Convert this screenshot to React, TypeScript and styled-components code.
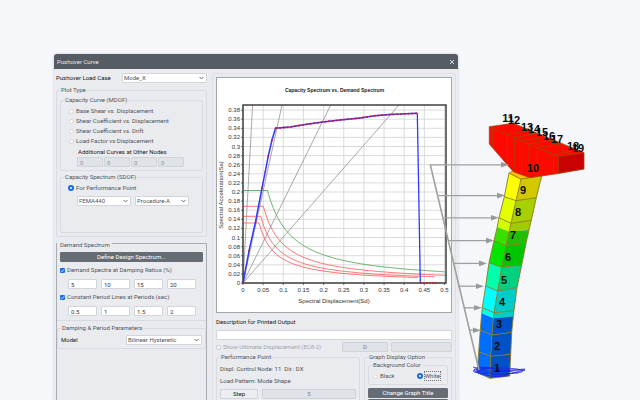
import React from "react";
import styled, { createGlobalStyle, css } from "styled-components";

const GlobalStyle = createGlobalStyle`
  *, *::before, *::after { box-sizing: border-box; }
  body {
    margin: 0;
    background: #f5f7fb;
    color: #50555c;
    font: 6px/8px Roboto, "Liberation Sans", sans-serif;
  }
  button, input, select { font: inherit; color: inherit; margin: 0; }
`;

const Page = styled.main`
  display: grid;
  grid-template-columns: minmax(404px, 1fr) 182px;
  grid-template-rows: minmax(0, 1fr);
  height: 100vh;
  padding: 54px 0 0 54px;
  overflow: hidden;
`;

const Dialog = styled.section`
  display: flex;
  flex-direction: column;
  min-height: 0;
  overflow: hidden;
  background: #e9ebef;
  border-radius: 3px 3px 0 0;
  box-shadow: 0 0 3px #c9ced6;
`;

const TitleBar = styled.header`
  display: flex;
  flex: none;
  align-items: center;
  justify-content: space-between;
  height: 15px;
  padding: 0 3px;
  background: #555c64;
  color: #e4e6e9;
`;

const Title = styled.h1`
  margin: 0;
  font: inherit;
`;

const CloseButton = styled.button`
  display: flex;
  padding: 0;
  border: 0;
  background: none;
`;

const Body = styled.div`
  display: grid;
  flex: 1;
  grid-template-columns: 158px 1fr;
  min-height: 0;
`;

const Settings = styled.div`
  display: flex;
  flex-direction: column;
  padding: 4px 5px 0 2px;
`;

const Results = styled.div`
  margin: 4px 2px 0 0;
  padding: 3px;
  border: 1px solid #dde0e5;
  border-radius: 2px;
`;

const Row = styled.div<{ $top?: number; $inset?: number }>`
  display: flex;
  align-items: center;
  margin-top: ${(p) => p.$top ?? 0}px;
  padding: 0 ${(p) => p.$inset ?? 0}px;
`;

const Spacer = styled.span<{ $small?: boolean }>`
  flex: ${(p) => (p.$small ? "0 0 4px" : "1")};
`;

const Group = styled.fieldset<{ $top?: number; $bottom?: number; $pad?: number }>`
  min-width: 0;
  margin: ${(p) => p.$top ?? 0}px 0 0;
  padding: ${(p) => p.$pad ?? 2}px 3px ${(p) => p.$bottom ?? 3}px;
  border: 1px solid #d8dbe0;
  border-radius: 2px;
`;

const Legend = styled.legend`
  padding: 0 1px;
`;

const DemandGroup = styled.fieldset`
  flex: 1;
  min-width: 0;
  margin: 0;
  padding: 3px 0 0;
  border: 1px solid #a9adb3;
  border-bottom: 0;
`;

const DemandLegend = styled.legend`
  padding: 4px 2px 0 3px;
`;

const Strong = styled.label`
  color: #16191c;
`;

const Caption = styled.div<{ $top?: number }>`
  margin-top: ${(p) => p.$top ?? 0}px;
  padding-left: 14px;
  color: #16191c;
`;

const Divider = styled.hr`
  width: 100%;
  height: 1px;
  margin: 4px 0 3px;
  border: 0;
  background: #d8dbe0;
`;

const SelectBox = styled.span<{ $width: number }>`
  display: grid;
  flex: none;
  width: ${(p) => p.$width}px;
  height: 10px;
  align-items: center;
  > * { grid-area: 1 / 1; }
  > svg { justify-self: end; margin-right: 3px; pointer-events: none; }
`;

const NativeSelect = styled.select`
  appearance: none;
  width: 100%;
  height: 10px;
  padding: 0 1px;
  border: 1px solid #d2d6db;
  border-radius: 1px;
  background: #fff;
  line-height: 8px;
`;

const TextBox = styled.input<{ $width?: number }>`
  width: ${(p) => (p.$width ? `${p.$width}px` : "100%")};
  min-width: 0;
  height: 10px;
  padding: 0 2px;
  border: 1px solid #d2d6db;
  border-radius: 1px;
  background: #fff;
  color: #33373c;
  line-height: 8px;
  &:disabled { background: #dfe2e7; color: #8d939b; border-color: #d1d5da; }
`;

const Fields = styled.div<{ $gap: number; $top: number; $left: number }>`
  display: flex;
  gap: ${(p) => p.$gap}px;
  margin-top: ${(p) => p.$top}px;
  padding-left: ${(p) => p.$left}px;
`;

const Option = styled.label<{ $muted?: boolean; $left?: number }>`
  display: flex;
  align-items: center;
  gap: 2px;
  height: 10px;
  padding-left: ${(p) => p.$left ?? 0}px;
  white-space: nowrap;
  ${(p) => p.$muted && css`color: #a2a7ae;`}
`;

const Radio = styled.input`
  appearance: none;
  flex: none;
  width: 5px;
  height: 5px;
  border: 1px solid #d3d7dc;
  border-radius: 50%;
  background: #fff;
  &:checked { width: 6px; height: 6px; margin-left: -1px; border: 2px solid #176be8; }
`;

const CheckMark = styled.span`
  display: grid;
  flex: none;
  width: 5px;
  height: 5px;
  > * { grid-area: 1 / 1; }
  > svg { pointer-events: none; }
`;

const CheckInput = styled.input`
  appearance: none;
  width: 5px;
  height: 5px;
  border: 1px solid #cdd1d7;
  border-radius: 1px;
  background: #eff1f4;
  &:checked { border: 0; background: #176be8; }
`;

const FocusText = styled.span`
  outline: 1px dotted #70757c;
`;

const Button = styled.button<{ $dark?: boolean; $flat?: boolean; $top?: number }>`
  width: 100%;
  height: 10px;
  margin-top: ${(p) => p.$top ?? 0}px;
  padding: 0;
  border: 1px solid #cfd3d8;
  border-radius: 1px;
  background: #eceef1;
  color: #16191c;
  line-height: 8px;
  ${(p) => p.$flat && css`background: #dfe2e7; color: #7b8088;`}
  ${(p) => p.$dark && css`background: #656c74; border-color: #656c74; color: #fff;`}
`;

const StepGrid = styled.div`
  display: grid;
  grid-template-columns: 38px 1fr;
  gap: 1px 4px;
  margin-top: 3px;
`;

const UltimateRow = styled.div`
  display: grid;
  grid-template-columns: 1fr 46px 61px;
  gap: 3px;
  margin-top: 2px;
`;

const Bottom = styled.div`
  display: grid;
  grid-template-columns: 1fr 88px;
  gap: 4px;
  align-items: start;
  margin-top: 1px;
`;

const Info = styled.p`
  margin: 0 0 4px;
  white-space: pre;
`;

const ChartFrame = styled.figure`
  margin: 0;
  border: 1px solid #a3a7ac;
  background: #fff;
  > svg { display: block; width: 100%; }
`;

const ModelView = styled.figure`
  z-index: 1;
  width: 212px;
  margin: 0 0 0 -30px;
  pointer-events: none;
  > svg { display: block; }
`;

function Select({ id, width, value, label }: { id?: string; width: number; value: string; label?: string }) {
  return (
    <SelectBox $width={width}>
      <NativeSelect id={id} aria-label={label} defaultValue={value}>
        <option>{value}</option>
      </NativeSelect>
      <svg width="5" height="4" viewBox="0 0 5 4" fill="none" stroke="#555b62" strokeWidth="0.9">
        <path d="M0.5 0.9L2.5 2.9L4.5 0.9" />
      </svg>
    </SelectBox>
  );
}

function Check({ label, checked, disabled }: { label: string; checked?: boolean; disabled?: boolean }) {
  return (
    <Option $muted={disabled}>
      <CheckMark>
        <CheckInput type="checkbox" defaultChecked={checked} disabled={disabled} />
        {checked && (
          <svg width="5" height="5" viewBox="0 0 5 5" fill="none" stroke="#fff" strokeWidth="0.8">
            <path d="M1 2.6L2.1 3.7L4.1 1.3" />
          </svg>
        )}
      </CheckMark>
      {label}
    </Option>
  );
}

const X0 = 243;
const Y0 = 283;
const X_LABELS = ["0", "0.05", "0.1", "0.15", "0.2", "0.25", "0.3", "0.35", "0.4", "0.45", "0.5"];
const Y_LABELS = Array.from({ length: 20 }, (_, i) => String(Number((i * 0.02).toFixed(2))));
const xTick = (i: number) => X0 + i * 20.15;
const yTick = (i: number) => Y0 - i * 9.1;

const CAPACITY: [number, number][] = [
  [243, 283], [249, 251], [255.7, 221], [262, 188], [265.3, 171.7], [268.3, 156],
  [272, 140], [275.5, 128.3], [290, 127], [306.7, 124.3], [323, 122], [340, 120],
  [360, 118], [375, 115.7], [390, 114.5], [417.3, 113.3],
];
const toPoints = (p: [number, number][]) => p.map((q) => q.join(",")).join(" ");

function demandCurve(plateau: number, corner: number, end: number) {
  const k = plateau * corner;
  let d = `M${X0} ${Y0 - plateau}H${X0 + corner}`;
  for (let x = corner + 3; x <= end; x += 3) d += `L${X0 + x} ${(Y0 - k / x).toFixed(1)}`;
  return d;
}

function SpectrumChart() {
  return (
    <ChartFrame>
      <svg viewBox="217 78 234 234" fontFamily='"Liberation Sans", sans-serif' fontSize="6" fill="#333" role="img" aria-label="Capacity and demand spectrum">
        <text x="334.5" y="92" fontSize="5" fontWeight="700" fill="#222" textAnchor="middle">Capacity Spectrum vs. Demand Spectrum</text>
        <g stroke="#d2d2d2" strokeWidth="0.8">
          {X_LABELS.map((l, i) => <path key={l} d={`M${xTick(i)} 105V285`} />)}
          {Y_LABELS.map((l, i) => <path key={l} d={`M241 ${yTick(i)}H446`} />)}
        </g>
        <g stroke="#858585" strokeWidth="0.7">
          <path d="M243 283L252.6 105M243 283L282 105M243 283L330.7 105M243 283L399 105" />
        </g>
        <g fill="none" strokeWidth="0.8">
          <path d={demandCurve(92.5, 24.5, 204)} stroke="#4aa04e" />
          <path d={demandCurve(76.7, 20.3, 204)} stroke="#ff5555" />
          <path d={demandCurve(66.7, 17.7, 194)} stroke="#ff5555" />
          <path d={demandCurve(60, 16, 175)} stroke="#ff5555" />
        </g>
        <rect x={X0} y="105" width="203" height="178" fill="none" stroke="#333" strokeWidth="1.4" />
        {X_LABELS.map((l, i) => <path key={l} d={`M${xTick(i)} 283V285`} stroke="#444" strokeWidth="0.7" />)}
        {Y_LABELS.map((l, i) => <path key={l} d={`M241 ${yTick(i)}H243`} stroke="#444" strokeWidth="0.7" />)}
        <polyline points={toPoints(CAPACITY)} fill="none" stroke="#3038ff" strokeWidth="1.5" />
        <polyline points={toPoints(CAPACITY.slice(7))} fill="none" stroke="#e8101c" strokeWidth="1.7" strokeDasharray="1.8 2" />
        <path d="M417.3 113.3L418.3 168L420.3 283" fill="none" stroke="#3038ff" strokeWidth="1.3" />
        <path d="M420 283H438" stroke="#e8101c" strokeWidth="1.6" strokeDasharray="1.6 1.4" />
        {CAPACITY.slice(0, 8).map(([x, y]) => <circle key={y} cx={x} cy={y} r="0.9" fill="#d0143c" />)}
        {X_LABELS.map((l, i) => <text key={l} x={xTick(i)} y="292" textAnchor="middle">{l}</text>)}
        {Y_LABELS.map((l, i) => <text key={l} x="240" y={yTick(i) + 2} textAnchor="end">{l}</text>)}
        <text x="334" y="303" textAnchor="middle">Spectral Displacement(Sd)</text>
        <text transform="translate(223 195) rotate(-90)" textAnchor="middle">Spectral Acceleration(Sa)</text>
      </svg>
    </ChartFrame>
  );
}

type Level = { l: [number, number]; m: [number, number]; r: [number, number] };
const LEVELS: Level[] = [
  { l: [509, 173], m: [521, 179], r: [542, 175] },
  { l: [504.3, 196.7], m: [516, 200.7], r: [536.3, 197.7] },
  { l: [499, 217.7], m: [511, 223.3], r: [531.3, 220.3] },
  { l: [497.3, 227], m: [509, 231.7], r: [529, 230] },
  { l: [494, 240.7], m: [506, 246], r: [526, 243.3] },
  { l: [489, 262.7], m: [501.7, 267.3], r: [521.7, 265] },
  { l: [485.7, 286], m: [497.7, 291], r: [517, 287.7] },
  { l: [482.3, 307.7], m: [494, 312.7], r: [514, 310.7] },
  { l: [481.7, 313.3], m: [493.3, 318.3], r: [513.3, 316.3] },
  { l: [480.3, 330], m: [492, 335], r: [511.7, 332.3] },
  { l: [478.7, 351.7], m: [490.7, 356.3], r: [510.7, 354.3] },
  { l: [477.3, 372.7], m: [490, 378.3], r: [509.7, 376] },
];
const FACES: [string, string][] = [
  ["#ffff00", "#d2c800"], ["#e4ff00", "#a8d000"], ["#d2ff00", "#a0cc00"], ["#38e000", "#20be00"],
  ["#00e600", "#00c400"], ["#00ffaa", "#00d080"], ["#00ffff", "#00cccc"], ["#00ffe6", "#00d0c0"],
  ["#006eff", "#0050c8"], ["#006eff", "#0050c8"], ["#006eff", "#0050c8"],
];
const NODES: [string, number, number][] = [
  ["1", 497, 368], ["2", 497, 346], ["3", 499, 324], ["4", 502, 302], ["5", 504, 279.5],
  ["6", 508, 257], ["7", 513, 235], ["8", 518, 212], ["9", 523, 190], ["10", 533, 167.5],
  ["11", 508, 118], ["12", 514, 120], ["13", 527, 126.5], ["14", 534, 129], ["15", 542, 132],
  ["16", 549, 135.5], ["17", 557, 139], ["18", 573, 146], ["19", 578, 148],
];
const ARROWS: [number, number, number][] = [
  [430, 509, 164.8], [438, 505, 195.6], [444, 499, 217.8], [448, 494, 240.6],
  [453, 487, 263.4], [458, 484, 286.2], [464, 482, 307.8], [469, 481, 330.2],
];
const SKIPPED_EDGES = [3, 8];

function PierModel() {
  return (
    <ModelView>
      <svg width="212" height="346" viewBox="428 54 212 346" role="img" aria-label="Bridge pier model">
        {FACES.map(([left, right], i) => {
          const a = LEVELS[i];
          const b = LEVELS[i + 1];
          return (
            <g key={i}>
              <polygon points={toPoints([a.l, a.m, b.m, b.l])} fill={left} />
              <polygon points={toPoints([a.m, a.r, b.r, b.m])} fill={right} />
            </g>
          );
        })}
        <g fill="none" stroke="#8a7a20" strokeWidth="0.9">
          {LEVELS.map((v, i) => !SKIPPED_EDGES.includes(i) && <polyline key={i} points={toPoints([v.l, v.m, v.r])} />)}
          <polyline points={toPoints(LEVELS.map((v) => v.l))} />
          <polyline points={toPoints(LEVELS.map((v) => v.m))} />
          <polyline points={toPoints(LEVELS.map((v) => v.r))} />
        </g>
        <path d="M509 173L515 169L532 174L542 175L521 179Z" fill="#ffc000" stroke="#8a7a20" strokeWidth="0.7" />
        <path d="M489.3 126.7L513.3 123.3L584 152.7V169L558.3 173.5L530 177.7L521.7 175L513.3 171.7L489.3 144Z" fill="#ff0800" />
        <path d="M558.3 156.5L584 152.7V169L558.3 173.5Z" fill="#c80000" />
        <path
          d="M489.3 144V126.7L513.3 123.3L584 152.7V169L558.3 173.5M489.3 126.7L515 138L558.3 156.5L584 152.7M492.3 128.5V147.5M507.3 134.7V164.5M514.3 137.7V171.7M521.7 141V175M529 144V177M537.3 147.7V176.5M553.3 154.5V174M558.3 156.5V173.5M507.3 134.7L529 130M514.3 137.7L537 133.5M521.7 141L545 137M529 144L553 140M537.3 147.7L562 144M553.3 154.5L578 150.3M489.3 144L513.3 171.7L530 177.7L558.3 173.5"
          fill="none" stroke="#a04a08" strokeWidth="0.8"
        />
        <g fill="none" stroke="#2222dd" strokeWidth="0.8">
          <ellipse cx="498" cy="371" rx="25" ry="3" />
          <ellipse cx="491" cy="372" rx="17" ry="4" transform="rotate(8 491 372)" />
          <path d="M473 367L486 371L525 370L504 375L476 371L490 368L518 373M502 371L525 369" />
        </g>
        <path d="M430.3 164.8L479 370" stroke="#a0a0a0" strokeWidth="1.6" />
        {ARROWS.map(([x1, x2, y]) => (
          <g key={y}>
            <path d={`M${x1} ${y}H${x2 - 5}`} stroke="#a0a0a0" strokeWidth="1.3" />
            <path d={`M${x2} ${y}L${x2 - 8} ${y - 2.8}V${y + 2.8}Z`} fill="#9a9a9a" />
          </g>
        ))}
        <g fontFamily='"Liberation Sans", sans-serif' fontSize="11" fontWeight="700" fill="#0a0a0a" textAnchor="middle">
          {NODES.map(([n, x, y]) => <text key={n} x={x} y={y + 4}>{n}</text>)}
        </g>
      </svg>
    </ModelView>
  );
}

const PLOT_TYPES = [
  "Base Shear vs. Displacement",
  "Shear Coefficient vs. Displacement",
  "Shear Coefficient vs. Drift",
  "Load Factor vs Displacement",
];

export default function App() {
  return (
    <>
      <GlobalStyle />
      <Page>
        <Dialog aria-label="Pushover Curve">
          <TitleBar>
            <Title>Pushover Curve</Title>
            <CloseButton aria-label="Close">
              <svg width="6" height="6" viewBox="0 0 6 6" stroke="#e8eaec" strokeWidth="0.9">
                <path d="M1 1L5 5M5 1L1 5" />
              </svg>
            </CloseButton>
          </TitleBar>
          <Body>
            <Settings>
              <Row>
                <Strong htmlFor="load-case">Pushover Load Case</Strong>
                <Spacer />
                <Select id="load-case" width={85} value="Mode_X" />
              </Row>
              <Group $top={3}>
                <Legend>Plot Type</Legend>
                <Group>
                  <Legend>Capacity Curve (MDOF)</Legend>
                  {PLOT_TYPES.map((t) => (
                    <Option key={t} $left={5}>
                      <Radio type="radio" name="plot" />
                      {t}
                    </Option>
                  ))}
                  <Caption $top={2}>Additional Curves at Other Nodes</Caption>
                  <Fields $gap={1} $top={1} $left={13}>
                    {[1, 2, 3, 4].map((n) => (
                      <TextBox key={n} $width={26} disabled defaultValue="0" aria-label={`Other node ${n}`} />
                    ))}
                  </Fields>
                </Group>
                <Group $top={2} $bottom={26}>
                  <Legend>Capacity Spectrum (SDOF)</Legend>
                  <Option $left={5}>
                    <Radio type="radio" name="plot" defaultChecked />
                    For Performance Point
                  </Option>
                  <Fields $gap={4} $top={3} $left={13}>
                    <Select width={54} value="FEMA440" label="Guideline" />
                    <Select width={54} value="Procedure-A" label="Procedure" />
                  </Fields>
                </Group>
              </Group>
              <DemandGroup>
                <DemandLegend>Demand Spectrum</DemandLegend>
                <Row $inset={3}><Button $dark>Define Design Spectrum...</Button></Row>
                <Row $inset={3} $top={3}><Check checked label="Demand Spectra at Damping Ratios (%)" /></Row>
                <Fields $gap={4} $top={4} $left={11}>
                  {["5", "10", "15", "20"].map((v, i) => (
                    <TextBox key={v} $width={29} defaultValue={v} aria-label={`Damping ratio ${i + 1}`} />
                  ))}
                </Fields>
                <Row $inset={3} $top={3}><Check checked label="Constant Period Lines at Periods (sec)" /></Row>
                <Fields $gap={4} $top={4} $left={11}>
                  {["0.5", "1", "1.5", "2"].map((v, i) => (
                    <TextBox key={v} $width={29} defaultValue={v} aria-label={`Period ${i + 1}`} />
                  ))}
                </Fields>
                <Divider />
                <Group $pad={3}>
                  <Legend>Damping &amp; Period Parameters</Legend>
                  <Row>
                    <Strong htmlFor="model">Model</Strong>
                    <Spacer />
                    <Select id="model" width={76} value="Bilinear Hysteretic" />
                  </Row>
                </Group>
              </DemandGroup>
            </Settings>
            <Results>
              <SpectrumChart />
              <Row $top={5}><Strong htmlFor="description">Description for Printed Output</Strong></Row>
              <Row $top={4}><TextBox id="description" /></Row>
              <UltimateRow>
                <Check disabled label="Show Ultimate Displacement  (EC8-2)" />
                <Button $flat disabled>D</Button>
                <TextBox disabled aria-label="Ultimate displacement" />
              </UltimateRow>
              <Bottom>
                <Group $pad={4}>
                  <Legend>Performance Point</Legend>
                  <Info>Displ. Control Node: 11  Dir.: DX</Info>
                  <Info>Load Pattern: Mode Shape</Info>
                  <StepGrid>
                    <Button>Step</Button>
                    <Button $flat>5</Button>
                    <Button aria-label="Value" />
                    <Button $flat aria-label="Result" />
                  </StepGrid>
                </Group>
                <Group $pad={0}>
                  <Legend>Graph Display Option</Legend>
                  <Group>
                    <Legend>Background Color</Legend>
                    <Row>
                      <Option $left={1}>
                        <Radio type="radio" name="background" />
                        Black
                      </Option>
                      <Spacer />
                      <Option>
                        <Radio type="radio" name="background" defaultChecked />
                        <FocusText>White</FocusText>
                      </Option>
                      <Spacer $small />
                    </Row>
                  </Group>
                  <Button $dark $top={3}>Change Graph Title</Button>
                  <Button $dark $top={1} aria-label="Graph options" />
                </Group>
              </Bottom>
            </Results>
          </Body>
        </Dialog>
        <PierModel />
      </Page>
    </>
  );
}
